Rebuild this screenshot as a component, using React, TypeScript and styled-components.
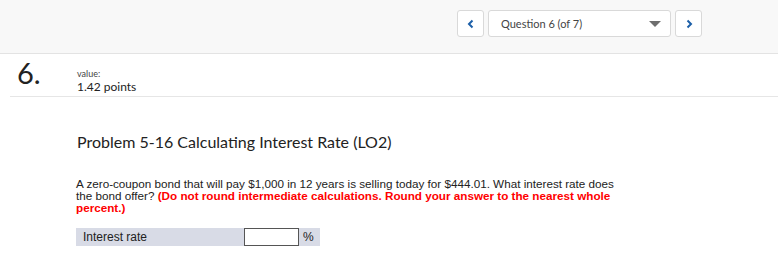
import React from "react";
import styled, { createGlobalStyle } from "styled-components";

const Global = createGlobalStyle`
  html, body { margin: 0; padding: 0; background: #ffffff; }
  body { font-family: "Lato", "Liberation Sans", sans-serif; color: #222; }
`;

const Page = styled.div`
  width: 778px;
  height: 271px;
  overflow: hidden;
  display: flex;
  flex-direction: column;
`;

const Header = styled.div`
  height: 54px;
  flex: none;
  background: #f8f8f8;
  border-bottom: 1px solid #e3e3e3;
  display: flex;
  align-items: flex-start;
  padding: 10px 0 0 457px;
  box-sizing: border-box;
  gap: 4px;
`;

const NavButton = styled.button`
  width: 27px;
  height: 27px;
  box-sizing: border-box;
  background: #fff;
  border: 1px solid #d9d9d9;
  border-radius: 3px;
  padding: 0;
  display: flex;
  align-items: center;
  justify-content: center;
  color: #1c5fa8;
`;

const Select = styled.div`
  width: 183px;
  height: 27px;
  box-sizing: border-box;
  background: #fff;
  border: 1px solid #d9d9d9;
  border-radius: 3px;
  display: flex;
  align-items: center;
  justify-content: space-between;
  padding: 0 9px 0 12px;
  font-size: 11px;
  color: #444;
`;

const Caret = styled.span`
  width: 0;
  height: 0;
  border-left: 6px solid transparent;
  border-right: 6px solid transparent;
  border-top: 6px solid #6e6e6e;
`;

const QuestionHead = styled.div`
  display: flex;
  flex: none;
  align-items: flex-start;
  margin-left: 10px;
  height: 43px;
  border-bottom: 1px solid #e6e6e6;
  box-sizing: border-box;
`;

const Number = styled.div`
  width: 67px;
  padding: 3px 0 0 7px;
  box-sizing: border-box;
  font-size: 29px;
  line-height: 32px;
  color: #222;
`;

const Meta = styled.div`
  padding-top: 14px;
  display: flex;
  flex-direction: column;
`;

const MetaLabel = styled.span`
  font-size: 9px;
  line-height: 11px;
  color: #444;
`;

const MetaValue = styled.span`
  font-size: 12px;
  line-height: 15px;
  color: #222;
`;

const Body = styled.div`
  padding: 35px 0 0 76px;
`;

const Title = styled.h2`
  margin: 0;
  padding-left: 1px;
  font-size: 16px;
  font-weight: 400;
  line-height: 20px;
  color: #222;
`;

const Question = styled.p`
  margin: 26px 0 0 0;
  width: 550px;
  font-family: "Liberation Sans", Arial, sans-serif;
  font-size: 11.7px;
  line-height: 12px;
  color: #222;
`;

const Emph = styled.b`
  color: #ff0000;
`;

const AnswerRow = styled.div`
  margin-top: 14px;
  display: flex;
  align-items: center;
  font-family: "Liberation Sans", Arial, sans-serif;
  font-size: 12px;
`;

const Label = styled.div`
  width: 168px;
  height: 18px;
  background: #d8dbe6;
  box-sizing: border-box;
  padding: 0 0 0 7px;
  display: flex;
  align-items: center;
  color: #222;
`;

const Input = styled.input`
  width: 55px;
  height: 18px;
  box-sizing: border-box;
  border: 1px solid #555;
  margin: 0;
  padding: 0;
  background: #fff;
`;

const Unit = styled.div`
  height: 18px;
  background: #d8dbe6;
  padding: 0 6px 0 4px;
  display: flex;
  align-items: center;
`;

const Chevron = ({ dir }: { dir: "l" | "r" }) => (
  <svg width="8" height="10" viewBox="0 0 8 10">
    <path
      d={dir === "l" ? "M5.5 1.5 L2 5 L5.5 8.5" : "M2.5 1.5 L6 5 L2.5 8.5"}
      fill="none"
      stroke="currentColor"
      strokeWidth="2"
    />
  </svg>
);

export default function App() {
  return (
    <Page>
      <Global />
      <Header>
        <NavButton aria-label="Previous"><Chevron dir="l" /></NavButton>
        <Select>
          <span>Question 6 (of 7)</span>
          <Caret />
        </Select>
        <NavButton aria-label="Next"><Chevron dir="r" /></NavButton>
      </Header>
      <QuestionHead>
        <Number>6.</Number>
        <Meta>
          <MetaLabel>value:</MetaLabel>
          <MetaValue>1.42 points</MetaValue>
        </Meta>
      </QuestionHead>
      <Body>
        <Title>Problem 5-16 Calculating Interest Rate (LO2)</Title>
        <Question>
          A zero-coupon bond that will pay $1,000 in 12 years is selling today for $444.01. What interest rate does
          the bond offer? <Emph>(Do not round intermediate calculations. Round your answer to the nearest whole percent.)</Emph>
        </Question>
        <AnswerRow>
          <Label>Interest rate</Label>
          <Input />
          <Unit>%</Unit>
        </AnswerRow>
      </Body>
    </Page>
  );
}
